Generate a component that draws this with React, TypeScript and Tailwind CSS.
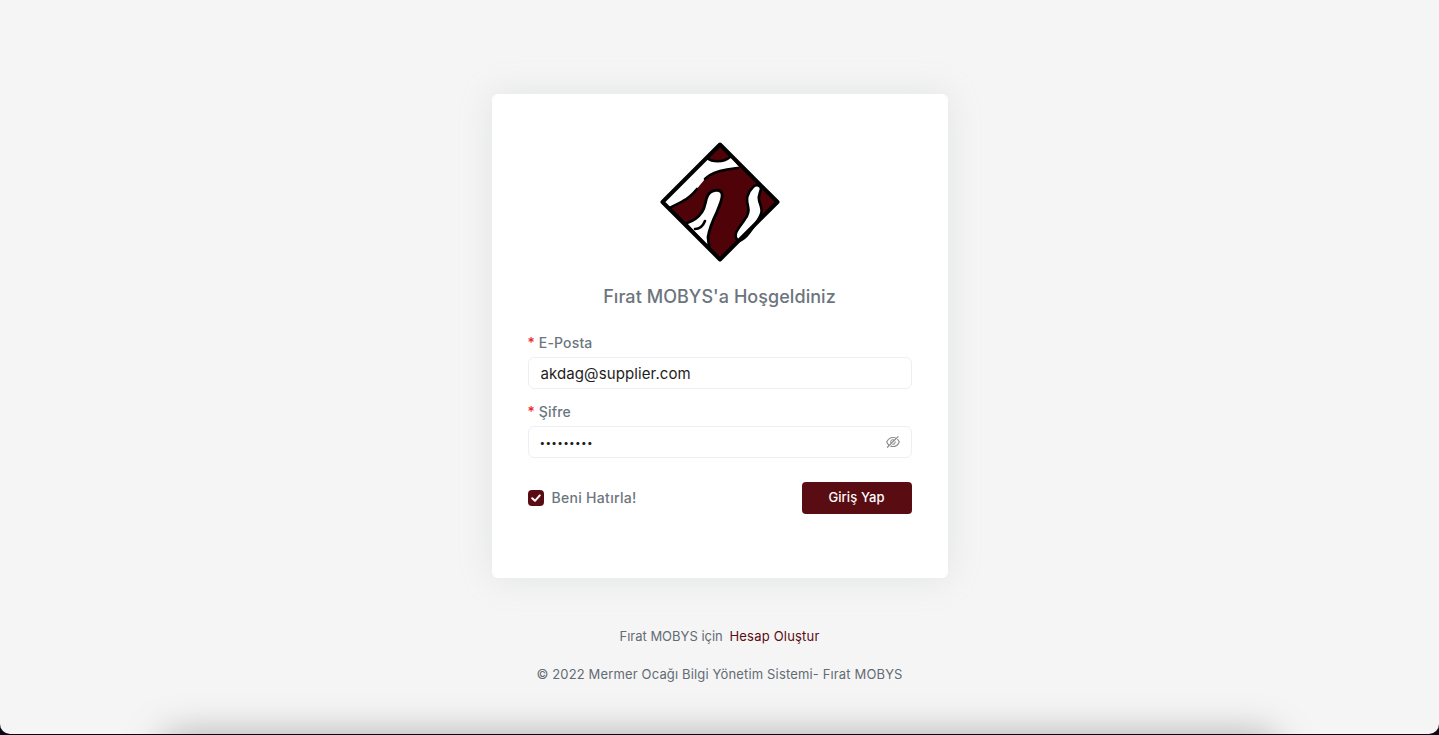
import { AiOutlineEyeInvisible } from "react-icons/ai";

function Logo() {
  return (
    <svg width="120" height="120" viewBox="0 0 120 120" className="block">
      <path d="M60 2.5 L117.5 60 L60 117.5 L2.5 60 Z" fill="#4f0309" />
      {/* white veins */}
      <path d="M47 16 C52 20 63 21 70 14 L79 25 C70 27 58 28 50 33 C47 35 46 37 45 37 L40 43 L36 48 C32 53 27 57 23 59 C18 62 13 64 9 66 L3 60 Z" fill="#fff" />
      <path d="M47 16 C52 20 63 21 70 15" fill="none" stroke="#000" strokeWidth="2.6" strokeLinecap="round" />
      <path d="M78 26 C70 27 58 28 50 33 C47 35 46 36 45 37 M37 47 C32 53 27 57 23 59 C18 62 13 64 9 66" fill="none" stroke="#000" strokeWidth="2.6" strokeLinecap="round" />
      <path d="M27 81 C33 79 38 76 42 70 C46 64 45 58 48 53 C51 48 61 46 62 52 C63 57 59 64 57 70 C54 76 50 84 48 95 L48 104 Z" fill="#fff" />
      <path d="M27 81 C33 79 38 76 42 70 C46 64 45 58 48 53 C51 48 61 46 62 52 C63 57 59 64 57 70 C54 76 50 84 48 95 L49 104" fill="none" stroke="#000" strokeWidth="2.8" strokeLinecap="round" />
      <path d="M35 87 C39 87 43 84 45 79" fill="none" stroke="#000" strokeWidth="2.6" strokeLinecap="round" />
      <path d="M93 45 C96 42 101 43 101 47 C100 51 98 54 99 58 C100 63 103 67 101 72 C99 78 94 84 89 91 C86 95 82 98 79 99 C76 98 75 94 76 91 C78 86 82 82 85 77 C89 72 89 68 88 64 C87 60 86 57 88 53 C89 50 91 47 93 45 Z" fill="#fff" stroke="#000" strokeWidth="2.6" strokeLinejoin="round" />
      {/* outline goes last so the veins stop at it */}
      <path d="M60 2.5 L117.5 60 L60 117.5 L2.5 60 Z" fill="none" stroke="#000" strokeWidth="4" strokeLinejoin="round" />
    </svg>
  );
}

export default function App() {
  return (
    <div className="h-[735px] overflow-hidden bg-[#0b0713] font-['Inter',sans-serif]">
      <div className="relative flex h-[734px] flex-col items-center overflow-hidden rounded-b-[10px] bg-[#f5f5f5]">
        <div className="mt-[94px] h-[484px] w-[456px] rounded-md bg-white px-9 pt-12 shadow-[0_0_35px_0_rgba(154,161,171,0.2)]">
          <div className="flex justify-center">
            <Logo />
          </div>
          <h1 className="mt-[21px] text-center text-[18px] leading-[27px] font-medium tracking-[0.05px] text-[#6c757d]">
            Fırat MOBYS'a Hoşgeldiniz
          </h1>
          <form className="mt-[22px]">
            <label className="block text-[14px] leading-[21px] font-medium tracking-[0.15px] text-[#6c757d]">
              <span className="text-[#f5222d]">*</span> E-Posta
            </label>
            <input
              readOnly
              value="akdag@supplier.com"
              className="mt-1 block h-8 w-full rounded-md border border-[#eeeff3] bg-white px-3 text-[15px] tracking-[0.1px] text-[#1d1d1d] outline-none"
            />
            <label className="mt-3 block text-[14px] leading-[21px] font-medium tracking-[0.15px] text-[#6c757d]">
              <span className="text-[#f5222d]">*</span> Şifre
            </label>
            <div className="mt-1 flex h-8 items-center rounded-md border border-[#eeeff3] bg-white px-[11px]">
              <input
                readOnly
                type="password"
                value="123456789"
                className="min-w-0 flex-1 bg-transparent text-[10px] tracking-[0.3px] text-[#1d1d1d] outline-none"
              />
              <AiOutlineEyeInvisible className="ml-auto translate-x-px text-[16px] text-[#8c8c8c]" />
            </div>
            <div className="mt-6 flex items-center justify-between">
              <label className="flex items-center gap-2 text-[14px] leading-[16px] font-medium tracking-[0.3px] text-[#6c757d]">
                <span className="flex size-4 items-center justify-center rounded bg-[#5a0c13]">
                  <svg width="12" height="12" viewBox="0 0 12 12">
                    <path d="M2.2 6.2 L5 8.8 L9.8 3.4" fill="none" stroke="#fff" strokeWidth="2" strokeLinecap="round" strokeLinejoin="round" />
                  </svg>
                </span>
                Beni Hatırla!
              </label>
              <button type="button" className="h-8 w-[110px] rounded bg-[#5a0c13] text-[13px] font-medium tracking-[0.1px] text-white">
                Giriş Yap
              </button>
            </div>
          </form>
        </div>
        <p className="mt-[48px] text-[13px] leading-[20px] text-[#636b74]">
          Fırat MOBYS için <a className="ml-[3px] tracking-[0.2px] text-[#5a0c13]">Hesap Oluştur</a>
        </p>
        <p className="mt-[18px] text-[13px] leading-[20px] tracking-[0.15px] text-[#636b74]">© 2022 Mermer Ocağı Bilgi Yönetim Sistemi- Fırat MOBYS</p>
        <div className="absolute top-[748px] right-[175px] left-[175px] h-10 shadow-[0_0_40px_10px_rgba(0,0,0,0.35)]" />
      </div>
    </div>
  );
}
